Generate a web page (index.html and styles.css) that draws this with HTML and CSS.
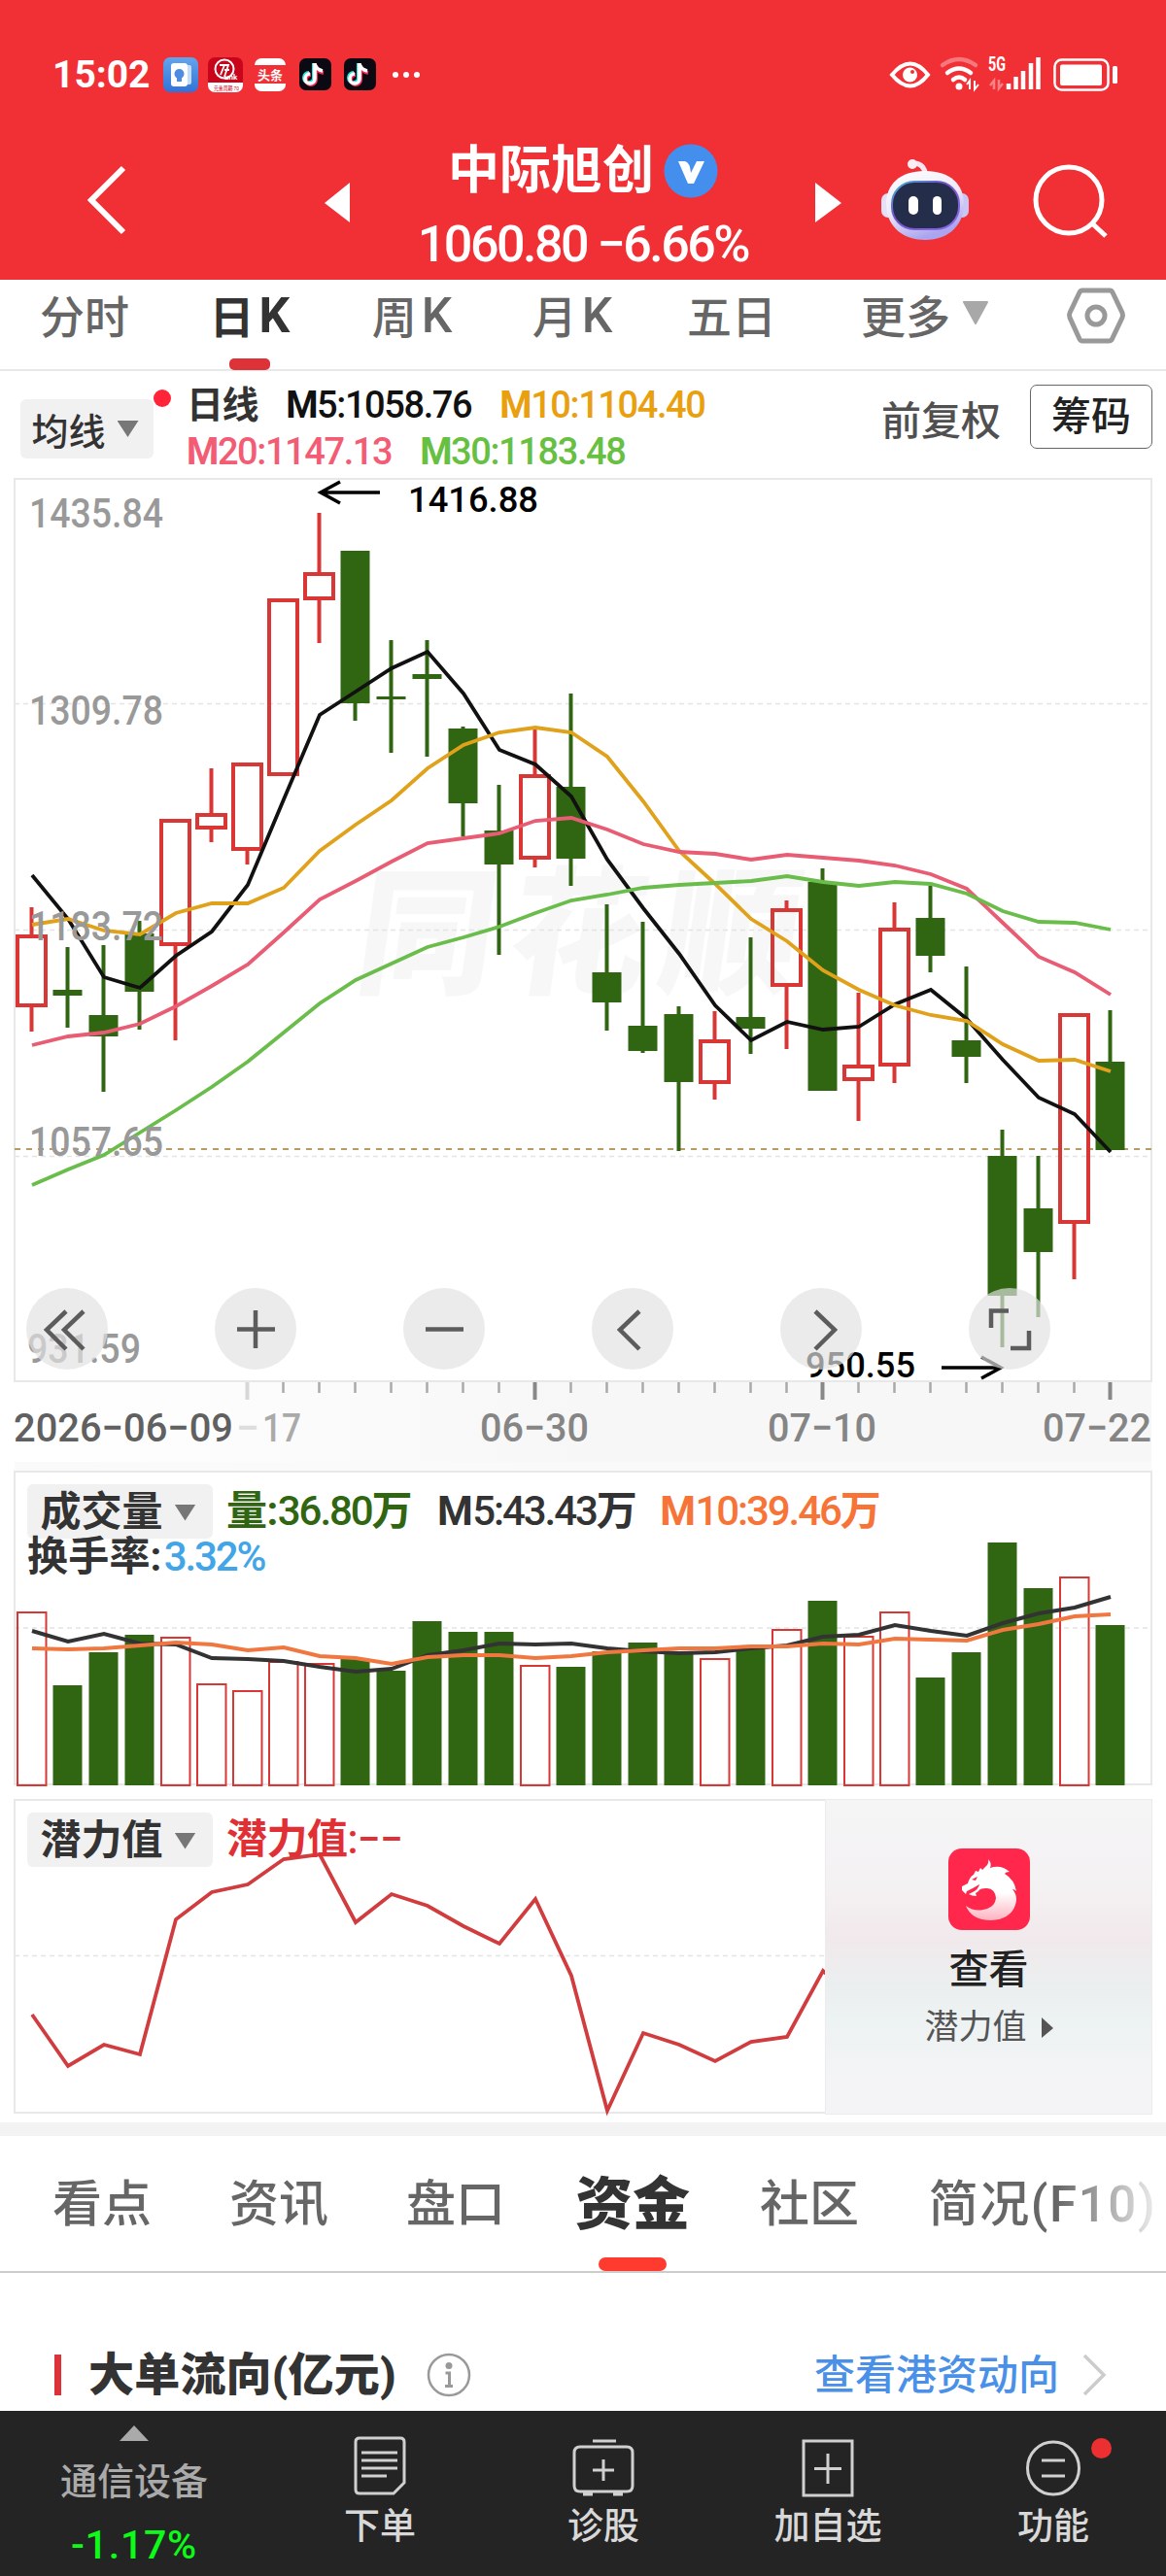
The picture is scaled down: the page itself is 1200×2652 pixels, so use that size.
FILE: index.html
```html
<!DOCTYPE html>
<html lang="zh-CN">
<head>
    <meta charset="UTF-8">
    <meta name="viewport" content="width=device-width, initial-scale=1.0">
    <title>中际旭创 - 日K</title>
    <link rel="stylesheet" href="styles.css">
</head>
<body>
    <header class="header">
        <div class="status-bar">
            <span class="time">15:02</span>
            <svg class="status-apps" width="270" height="40" viewBox="166 57 270 40">
                <defs>
                    <linearGradient id="appBlue" x1="0" y1="0" x2="0" y2="1">
                        <stop offset="0" stop-color="#62a5ec"/><stop offset="1" stop-color="#3272d8"/>
                    </linearGradient>
                    <g id="note">
                        <rect width="33" height="33" rx="7" fill="#0b0912"/>
                        <path d="M16 6v15a5 5 0 1 1-5-5M16 7q2 6 8 7" fill="none" stroke="#27e5df" stroke-width="4" transform="translate(-1 -1)"/>
                        <path d="M16 6v15a5 5 0 1 1-5-5M16 7q2 6 8 7" fill="none" stroke="#f32b58" stroke-width="4" transform="translate(1 1)"/>
                        <path d="M16 5v16a5 5 0 1 1-5-5M16 6q2 6 8 7" fill="none" stroke="#fff" stroke-width="3.6"/>
                    </g>
                </defs>
                <rect x="168" y="59" width="36" height="36" rx="7" fill="url(#appBlue)"/>
                <rect x="188" y="67" width="9" height="20" rx="2" fill="#c3dcfa"/>
                <rect x="176" y="65" width="17" height="24" rx="3" fill="#fff"/>
                <circle cx="184.500" cy="76" r="5" fill="#4c8de2"/>
                <rect x="182" y="79" width="5" height="5" fill="#4c8de2"/>
                <rect x="214" y="59" width="36" height="36" rx="7" fill="#c9051c"/>
                <path d="M214 85h36v3a7 7 0 0 1-7 7h-22a7 7 0 0 1-7-7z" fill="#fff"/>
                <circle cx="231" cy="71" r="9.500" fill="none" stroke="#fff" stroke-width="2"/>
                <path d="M226 67h9l-4 12M231 67l-4 10M231 72h5" fill="none" stroke="#fff" stroke-width="1.800"/>
                <text class="app-tiny" x="231" y="82">unk</text>
                <text class="app-red" x="220" y="93" textLength="26" lengthAdjust="spacingAndGlyphs">元素周期·70</text>
                <rect x="262" y="60" width="32" height="34" rx="7" fill="#fff"/>
                <rect x="262" y="67" width="32" height="19" fill="#f13036"/>
                <text class="app-toutiao" x="265" y="82">头条</text>
                <use href="#note" x="308" y="60"/>
                <use href="#note" x="354" y="60"/>
                <g fill="#fff"><circle cx="407" cy="77" r="3"/><circle cx="418" cy="77" r="3"/><circle cx="429" cy="77" r="3"/></g>
            </svg>
            <svg class="status-system" width="240" height="60" viewBox="914 47 240 60">
                <path d="M918 77q19-23 37 0q-18 23-37 0z" fill="none" stroke="#fff" stroke-width="4"/>
                <circle cx="936.500" cy="77" r="7.500" fill="#fff"/><circle cx="939" cy="74" r="2" fill="#f13036"/>
                <g fill="none" stroke="#fff" stroke-linecap="round" stroke-width="4.500">
                    <path d="M970 67q17-12 34 0" opacity=".35"/>
                    <path d="M975 75q12-9 24 0M981 82q6-5 12 0"/>
                </g>
                <circle cx="987" cy="89" r="3.500" fill="#fff"/>
                <path d="M998 92v-9l-3 4M1003 83v9l4-5" fill="none" stroke="#fff" stroke-width="2"/>
                <text class="net" x="1017" y="73" textLength="18" lengthAdjust="spacingAndGlyphs">5G</text>
                <path d="M1023 92v-9l-4 5M1028 82v9l4-5" fill="none" stroke="#fff" stroke-width="2.500" opacity=".4"/>
                <path d="M1038 86v6M1045.500 79v13M1053 73v19M1061 65v27M1068.500 59v33" stroke="#fff" stroke-width="4.500"/>
                <rect x="1085.500" y="61.500" width="55" height="31" rx="7" fill="none" stroke="#fff" stroke-width="2.500"/>
                <rect x="1091" y="66.500" width="43" height="21.500" rx="2" fill="#fff"/>
                <rect x="1145" y="68" width="5" height="18" rx="1.500" fill="#fff"/>
            </svg>
        </div>
        <nav class="nav-bar">
            <svg width="46" height="78" viewBox="0 0 46 78"><path d="M42 6L9 39l33 33" fill="none" stroke="#fff" stroke-width="6"/></svg>
            <svg width="27" height="42" viewBox="0 0 27 42"><path d="M26 0v41L0 21z" fill="#fff"/></svg>
            <div class="stock">
                <div class="stock-name">中际旭创
                    <svg width="56" height="56" viewBox="0 0 56 56"><circle cx="28" cy="28" r="27.500" fill="#448fee"/><path d="M15 18h7q5 1 6 12l6-12h8L31 41h-6z" fill="#fff"/></svg>
                </div>
                <div class="stock-price">1060.80 −6.66%</div>
            </div>
            <svg width="27" height="42" viewBox="0 0 27 42"><path d="M0 0v41l27-20z" fill="#fff"/></svg>
            <svg width="92" height="86" viewBox="906 162 92 86">
                <defs>
                    <linearGradient id="head" x1="0" y1="0" x2=".4" y2="1">
                        <stop offset="0" stop-color="#fff"/><stop offset=".55" stop-color="#eeeaf8"/><stop offset="1" stop-color="#aaa5ee"/>
                    </linearGradient>
                    <linearGradient id="visor" x1="0" y1="0" x2="1" y2="1">
                        <stop offset="0" stop-color="#3fb8d2"/><stop offset=".4" stop-color="#7450c9"/><stop offset="1" stop-color="#8e6bec"/>
                    </linearGradient>
                </defs>
                <path d="M939 168q12-1 14 13" fill="none" stroke="#f6e6f1" stroke-width="5"/>
                <circle cx="939" cy="169" r="5" fill="#fbeff6"/>
                <rect x="907" y="199" width="16" height="25" rx="7" fill="#e4e0f8"/>
                <rect x="981" y="199" width="16" height="25" rx="7" fill="#c9c6f6"/>
                <path d="M952 176c26 0 40 14 40 34s-14 37-40 37-40-17-40-37 14-34 40-34z" fill="url(#head)"/>
                <rect x="918" y="187" width="69" height="49" rx="23" fill="#242d49" stroke="url(#visor)" stroke-width="2"/>
                <rect x="935" y="202" width="10" height="19" rx="5" fill="#fff"/><rect x="960" y="202" width="9" height="19" rx="4.500" fill="#fff"/>
            </svg>
            <svg width="78" height="80" viewBox="1062 168 78 80"><circle cx="1100" cy="207" r="34" fill="none" stroke="#fff" stroke-width="5"/><path d="M1124 231l14 13" stroke="#fff" stroke-width="5"/></svg>
        </nav>
    </header>

    <div class="period-tabs">
        <div class="period">分时</div>
        <div class="period active">日<span>K</span></div>
        <div class="period">周<span>K</span></div>
        <div class="period">月<span>K</span></div>
        <div class="period">五日</div>
        <div class="period">更多<svg width="28" height="26" viewBox="0 0 28 26"><path d="M2 1h24L14 23z" fill="#a8a8a8" stroke="#a8a8a8" stroke-width="2" stroke-linejoin="round"/></svg></div>
        <div class="period settings">
            <svg width="62" height="60" viewBox="0 0 62 60"><path d="M17 4h28q2 0 3 2l10 21q1 3 0 5L48 53q-1 3-4 3H17q-2 0-3-2L4 32q-1-3 0-5L14 6q1-2 3-2z" fill="none" stroke="#999" stroke-width="5"/><circle cx="31" cy="30" r="9" fill="none" stroke="#999" stroke-width="5"/></svg>
        </div>
    </div>

    <div class="ma-bar">
        <div class="pill ma-pill">均线<i class="caret"></i><b class="dot"></b></div>
        <div class="ma-values">
            <div><span class="c-title">日线</span><span class="c-m5"><b>M</b>5:1058.76</span><span class="c-m10"><b>M</b>10:1104.40</span></div>
            <div><span class="c-m20"><b>M</b>20:1147.13</span><span class="c-m30"><b>M</b>30:1183.48</span></div>
        </div>
        <div class="adjust">前复权</div>
        <div class="chips">筹码</div>
    </div>

    <div class="panel">
        <svg id="kline" width="1200" height="1013" viewBox="0 492 1200 1013"></svg>
        <div class="controls">
            <button><svg viewBox="0 0 84 84"><path d="M41 24L21 43l20 20M59 24L39 43l20 20"/></svg></button>
            <button><svg viewBox="0 0 84 84"><path d="M42 23v39M23 42.500h39"/></svg></button>
            <button><svg viewBox="0 0 84 84"><path d="M23 42.500h39"/></svg></button>
            <button><svg viewBox="0 0 84 84"><path d="M49 24L29 43l20 20"/></svg></button>
            <button><svg viewBox="0 0 84 84"><path d="M36 24l20 19-20 20"/></svg></button>
            <button><svg viewBox="0 0 84 84"><path d="M41 23.500H23V41M62 44v18H43"/></svg></button>
        </div>
    </div>

    <div class="panel">
        <svg id="volume" width="1200" height="343" viewBox="0 1505 1200 343"></svg>
        <div class="indicator volume-info">
            <div class="pill">成交量<i class="caret"></i></div>
            <span class="c-vol"><b>量:</b>36.80<b>万</b></span>
            <span class="c-dark"><b>M</b>5:43.43<b>万</b></span>
            <span class="c-orange"><b>M</b>10:39.46<b>万</b></span>
            <div class="turnover"><b>换手率:</b><span>3.32%</span></div>
        </div>
    </div>

    <div class="panel">
        <svg id="potential" width="1200" height="337" viewBox="0 1848 1200 337"></svg>
        <div class="indicator potential-info">
            <div class="pill">潜力值<i class="caret"></i></div>
            <span class="c-red"><b>潜力值</b>:−−</span>
        </div>
        <div class="promo">
            <svg width="84" height="84" viewBox="0 0 84 84">
                <defs><linearGradient id="dragon" x1="0" y1="0" x2="0" y2="1"><stop offset=".55" stop-color="#fff"/><stop offset="1" stop-color="#ffb3c0"/></linearGradient></defs>
                <rect width="84" height="84" rx="14" fill="#ff274b"/>
                <path d="M38 19Q42 16 41 11Q45 15 43 20Q54 16 63 24Q59 24 58 26Q68 32 70 44Q68 42 66 42Q72 49 69 58Q64 73 44 74Q24 74 18 59Q26 65 36 63Q48 61 49 51Q48 41 39 41Q32 41 31 44L28 46L29 49Q24 49 21 47L25 45Q31 42 32 37L25 41L19 44L18 47L14 43V39L20 36Q22 29 26 27L28 23L31 24L33 20L35 22Z" fill="url(#dragon)"/>
                <path d="M24 32l6-3-2 4z" fill="#ff274b"/>
            </svg>
            <div class="promo-title">查看</div>
            <div class="promo-sub">潜力值<svg width="13" height="22" viewBox="0 0 13 22"><path d="M1 0v21l12-10z" fill="#555"/></svg></div>
        </div>
    </div>

    <div class="divider"></div>

    <div class="detail-tabs">
        <div class="detail">看点</div>
        <div class="detail">资讯</div>
        <div class="detail">盘口</div>
        <div class="detail active">资金</div>
        <div class="detail">社区</div>
        <div class="detail faded">简况(F10)</div>
    </div>

    <section class="flow">
        <h2>大单流向(亿元)</h2>
        <svg width="46" height="46" viewBox="0 0 46 46"><circle cx="23" cy="23" r="21" fill="none" stroke="#999" stroke-width="2.500"/><circle cx="23" cy="13.500" r="3.500" fill="#999"/><path d="M19.500 21h4v13M19 34.500h8" fill="none" stroke="#999" stroke-width="3"/></svg>
        <a href="#">查看港资动向</a>
        <svg width="26" height="44" viewBox="0 0 26 44"><path d="M3 2l20 20L3 42" fill="none" stroke="#ccc" stroke-width="3.500"/></svg>
    </section>

    <footer class="toolbar">
        <div class="sector">
            <svg width="30" height="16" viewBox="0 0 30 16"><path d="M15 0l15 16H0z" fill="#aaa"/></svg>
            <div class="sector-name">通信设备</div>
            <div class="sector-change">-1.17%</div>
        </div>
        <div class="tool">
            <svg viewBox="0 0 60 64"><path d="M9 3h42q4 0 4 4v42L44 60H9q-4 0-4-4V7q0-4 4-4zM11 18h37M11 26h37M11 34h37M11 42h26"/></svg>下单
        </div>
        <div class="tool">
            <svg viewBox="0 0 60 64"><path d="M19 6h24M6 12h48q6 0 6 6v34q0 6-6 6H6q-6 0-6-6V18q0-6 6-6zM30 25v22M19 36h22M9 61h10M40 61h10"/></svg>诊股
        </div>
        <div class="tool">
            <svg viewBox="0 0 60 64"><path d="M5 6h50v56H5zM30 19v31M16 34.500h28"/></svg>加自选
        </div>
        <div class="tool">
            <svg viewBox="0 0 60 64"><ellipse cx="30" cy="34" rx="26.500" ry="27"/><path d="M18 26h24M18 42h24"/></svg>功能
            <b class="dot"></b>
        </div>
    </footer>

    <script>
        const RED = '#d93636';
        const GREEN = '#306612';
        const x = i => 32.5 + 37 * i;

        // [up, high, top, bottom, low]
        const candles = [
            [1, 934, 962, 1037, 1062], [0, 975, 1019, 1025, 1058], [0, 973, 1045, 1067, 1124],
            [0, 948, 961, 1021, 1060], [1, 843, 843, 974, 1071], [1, 791, 837, 854, 867],
            [1, 785, 785, 876, 890], [1, 616, 616, 799, 799], [1, 528, 589, 618, 662],
            [0, 567, 567, 724, 742], [0, 659, 717, 720, 775], [0, 659, 694, 699, 779],
            [0, 748, 750, 827, 861], [0, 808, 855, 890, 983], [1, 750, 797, 885, 893],
            [0, 714, 810, 884, 912], [0, 931, 1001, 1032, 1061], [0, 949, 1056, 1082, 1084],
            [0, 1036, 1044, 1114, 1185], [1, 1041, 1070, 1116, 1132], [0, 965, 1047, 1059, 1085],
            [1, 927, 935, 1016, 1080], [0, 894, 908, 1123, 1123], [1, 1022, 1096, 1113, 1154],
            [1, 929, 955, 1098, 1115], [0, 912, 945, 984, 1001], [0, 995, 1071, 1088, 1115],
            [0, 1163, 1190, 1334, 1387], [0, 1190, 1244, 1289, 1356], [1, 1043, 1043, 1260, 1317],
            [0, 1040, 1093, 1184, 1184]
        ];
        const averages = {
            '#111111': [901, 946, 1006, 1017, 984, 959, 911, 823, 736, 712, 688, 671, 714, 772, 787, 820, 885, 935, 982, 1035, 1071, 1052, 1060, 1057, 1034, 1019, 1049, 1091, 1130, 1147, 1186],
            '#e0a11b': [952, 946, 958, 962, 940, 930, 930, 914, 876, 849, 824, 791, 767, 754, 749, 754, 779, 825, 876, 910, 946, 969, 999, 1019, 1035, 1045, 1051, 1075, 1092, 1091, 1103],
            '#e85c74': [1076, 1067, 1063, 1054, 1036, 1015, 993, 960, 926, 907, 887, 868, 863, 858, 845, 842, 854, 869, 877, 879, 885, 880, 883, 886, 891, 900, 915, 950, 985, 1001, 1024],
            '#6abd4b': [1220, 1204, 1189, 1166, 1143, 1119, 1093, 1063, 1033, 1009, 992, 975, 965, 954, 940, 927, 921, 914, 911, 909, 907, 902, 908, 912, 908, 910, 920, 938, 949, 950, 957]
        };
        const volumes = [1659, 1735, 1701, 1683, 1685, 1733, 1740, 1710, 1712, 1708, 1720, 1669, 1680, 1680, 1714, 1716, 1700, 1691, 1700, 1707, 1698, 1677, 1648, 1684, 1659, 1727, 1701, 1588, 1635, 1623, 1673];
        const volumeAverages = {
            '#333333': [1679, 1690, 1682, 1692, 1693, 1707, 1708, 1710, 1716, 1721, 1718, 1704, 1699, 1692, 1693, 1692, 1697, 1700, 1702, 1701, 1697, 1694, 1685, 1683, 1673, 1679, 1684, 1671, 1661, 1655, 1644],
            '#f07840': [1697, 1698, 1697, 1694, 1691, 1693, 1699, 1696, 1705, 1707, 1713, 1706, 1704, 1704, 1707, 1705, 1701, 1699, 1697, 1697, 1695, 1695, 1692, 1693, 1687, 1688, 1689, 1678, 1672, 1664, 1662]
        };
        const potential = [2074, 2127, 2105, 2115, 1976, 1948, 1940, 1914, 1909, 1979, 1950, 1962, 1983, 2001, 1955, 2034, 2173, 2093, 2105, 2122, 2102, 2097, 2029, 2062];

        function rect(left, top, w, h, attrs) {
            return `<rect x="${left}" y="${top}" width="${w}" height="${h}" ${attrs}/>`;
        }
        function line(x1, y1, x2, y2, attrs) {
            return `<path d="M${x1} ${y1}L${x2} ${y2}" ${attrs}/>`;
        }
        function curve(values, color, width) {
            const points = values.map((v, i) => `${x(i) + 0.5},${v}`).join(' ');
            return `<polyline points="${points}" fill="none" stroke="${color}" stroke-width="${width}"/>`;
        }
        function label(str, left, base, width, cls) {
            return `<text class="${cls}" x="${left}" y="${base}" textLength="${width}" lengthAdjust="spacingAndGlyphs">${str}</text>`;
        }
        function grid(y) {
            return line(15, y, 1185, y, 'class="grid"');
        }

        function drawKline() {
            let s = '<defs><linearGradient id="axisFade" x1="0" y1="0" x2="1" y2="0"><stop offset="0" stop-color="#f7f7f7" stop-opacity="0"/><stop offset=".5" stop-color="#f7f7f7"/></linearGradient></defs>';
            s += rect(15, 1422, 1170, 83, 'fill="url(#axisFade)"');
            s += rect(15, 493, 1170, 929, 'class="frame"');
            s += '<text class="watermark" transform="translate(362 1012) skewX(-8)" textLength="455">同花顺</text>';
            s += grid(724.5) + grid(957.5) + grid(1190.5);
            s += line(15, 1183, 1185, 1183, 'class="last-price"');
            candles.forEach(([up, high, top, bottom, low], i) => {
                const color = up ? RED : GREEN;
                const stroke = `stroke="${color}" stroke-width="4" fill="none"`;
                if (high < top) s += line(x(i), high, x(i), top, stroke);
                if (low > bottom) s += line(x(i), bottom, x(i), low, stroke);
                s += up ? rect(x(i) - 14.5, top + 2, 29, bottom - top - 4, stroke)
                        : rect(x(i) - 15, top, 30, bottom - top, `fill="${color}"`);
            });
            Object.entries(averages).forEach(([color, values]) => s += curve(values, color, 3.8));
            [['1435.84', 543], ['1309.78', 746], ['1183.72', 968], ['1057.65', 1190]].forEach(([v, y]) => s += label(v, 30, y, 138, 'price'));
            s += label('931.59', 28, 1403, 117, 'price');
            s += '<path d="M391 507H330M350 496L330 507L350 518M969 1408H1030M1010 1397L1030 1408L1010 1419" fill="none" stroke="#000" stroke-width="3.5"/>';
            s += label('1416.88', 420, 527, 134, 'extreme') + label('950.55', 829, 1418, 113, 'extreme');
            for (let i = 6; i <= 30; i++) {
                const major = i % 8 === 6;
                s += line(x(i), 1423, x(i), major ? 1441 : 1434, `stroke="${i === 6 ? '#d8d8d8' : major ? '#888' : '#aaa'}" stroke-width="${major ? 4 : 2.5}"`);
            }
            s += label('2026−06−09', 14, 1484, 226, 'date dark');
            s += label('−', 243, 1484, 24, 'date pale') + label('17', 270, 1484, 40, 'date light');
            s += label('06−30', 494, 1484, 112, 'date') + label('07−10', 790, 1484, 112, 'date') + label('07−22', 1073, 1484, 112, 'date');
            document.getElementById('kline').innerHTML = s;
        }

        function drawVolume() {
            let s = rect(15, 1505, 1170, 10, 'fill="#fafafa"') + rect(15, 1515, 1170, 322, 'class="frame"') + grid(1676);
            volumes.forEach((top, i) => {
                s += candles[i][0] ? rect(x(i) - 14.5, top + 1, 29.5, 1837 - top, `fill="none" stroke="${RED}" stroke-width="2"`)
                                   : rect(x(i) - 15, top, 30, 1838 - top, `fill="${GREEN}"`);
            });
            Object.entries(volumeAverages).forEach(([color, values]) => s += curve(values, color, 4));
            document.getElementById('volume').innerHTML = s;
        }

        function drawPotential() {
            document.getElementById('potential').innerHTML =
                rect(15, 1853, 1170, 322, 'class="frame"') + grid(2013.5) + curve(potential, '#d13c3e', 3.8);
        }

        drawKline();
        drawVolume();
        drawPotential();
    </script>
</body>
</html>
```

FILE: styles.css
```css
* {
    margin: 0;
    padding: 0;
    box-sizing: border-box;
}

body {
    width: 1200px;
    height: 2652px;
    overflow: hidden;
    font-family: Roboto, 'Noto Sans CJK SC', sans-serif;
    background: #fff;
    color: #333;
}

svg {
    display: block;
    flex-shrink: 0;
}

/* header */
.header {
    height: 288px;
    background: #f13036;
    color: #fff;
}

.status-bar {
    height: 154px;
    padding: 0 46px 0 54px;
    display: flex;
    align-items: center;
}

.time {
    width: 112px;
    font-size: 39px;
    font-weight: 700;
    white-space: nowrap;
}

.status-system {
    margin-left: auto;
}

.app-tiny {
    font-size: 8px;
    font-weight: 700;
    fill: #fff;
}

.app-red {
    font-size: 6px;
    fill: #c9051c;
}

.app-toutiao {
    font-size: 13px;
    font-weight: 700;
    fill: #fff;
}

.net {
    font-size: 20px;
    font-weight: 700;
    fill: #fff;
}

.nav-bar {
    height: 134px;
    display: grid;
    grid-template-columns: 249px 27px 478px 41px 182px 78px;
    align-items: start;
    padding: 13px 0 0 85px;
}

.nav-bar > svg:nth-of-type(2),
.nav-bar > svg:nth-of-type(3) {
    margin-top: 21px;
}

.nav-bar > svg:nth-of-type(4) {
    margin: -5px 0 0 26px;
}

.stock {
    margin-top: -22px;
    text-align: center;
}

.stock-name {
    height: 62px;
    line-height: 62px;
    display: flex;
    align-items: center;
    justify-content: center;
    gap: 10px;
    font-size: 53px;
    font-weight: 700;
}

.stock-price {
    margin-top: 15px;
    line-height: 60px;
    font-size: 52px;
    font-weight: 500;
    letter-spacing: -2.5px;
    white-space: nowrap;
}

/* period tabs */
.period-tabs {
    height: 94px;
    display: grid;
    grid-template-columns: 174px 172px 156px 174px 154px 244px 108px;
    border-bottom: 2px solid #e8e8e8;
}

.period {
    height: 74px;
    padding-bottom: 4px;
    display: flex;
    align-items: center;
    justify-content: center;
    position: relative;
    font-size: 46px;
    font-weight: 500;
    color: #666;
}

.period span {
    margin-left: 5px;
    padding-top: 4px;
    font-size: 50px;
}

.period svg {
    margin-left: 12px;
}

.period.settings {
    padding-bottom: 0;
}

.period.settings svg {
    margin-left: 0;
}

.period.active {
    padding-right: 6px;
    font-weight: 700;
    color: #333;
}

.period.active::after {
    content: '';
    position: absolute;
    left: 62px;
    bottom: -19px;
    width: 42px;
    height: 12px;
    border-radius: 5px;
    background: #dd3338;
}

/* moving averages */
.ma-bar {
    height: 110px;
    padding: 0 14px 0 21px;
    display: flex;
    align-items: flex-start;
}

.pill {
    display: flex;
    align-items: center;
    justify-content: center;
    gap: 12px;
    border-radius: 6px;
    background: #f1f1f1;
    color: #333;
    font-weight: 700;
}

.ma-pill {
    width: 137px;
    height: 61px;
    margin-top: 29px;
    padding-right: 4px;
    position: relative;
    font-size: 38px;
    font-weight: 500;
}

.caret {
    width: 22px;
    height: 17px;
    background: #777;
    clip-path: polygon(0 0, 100% 0, 50% 100%);
}

.dot {
    position: absolute;
    border-radius: 50%;
    background: #ff2438;
}

.ma-pill .dot {
    top: -10px;
    right: -18px;
    width: 18px;
    height: 18px;
}

.ma-values {
    padding: 11px 0 0 34px;
    font-size: 38px;
    font-weight: 500;
    letter-spacing: -1.4px;
    line-height: 48px;
}

.ma-values div {
    height: 48px;
    display: flex;
    white-space: nowrap;
    gap: 29px;
}

.c-title {
    font-weight: 700;
}

.c-m5 { color: #111; }
.c-m10 { color: #e8a010; }
.c-m20 { color: #f25c75; }
.c-m30 { color: #68c043; }

.adjust {
    margin-left: auto;
    margin-right: 30px;
    margin-top: 22px;
    line-height: 60px;
    font-size: 41px;
    font-weight: 500;
    color: #505050;
    white-space: nowrap;
}

.chips {
    width: 126px;
    height: 66px;
    margin-top: 14px;
    border: 1.5px solid #666;
    border-radius: 7px;
    line-height: 64px;
    text-align: center;
    font-size: 41px;
    font-weight: 500;
    color: #222;
}

/* charts */
.panel {
    position: relative;
}

.frame {
    fill: none;
    stroke: #e8e8e8;
    stroke-width: 2;
}

.grid {
    stroke: #e4e4e4;
    stroke-width: 1.5;
    stroke-dasharray: 5 4;
}

.last-price {
    stroke: #b99b62;
    stroke-width: 2;
    stroke-dasharray: 6 6;
}

.watermark {
    font-size: 142px;
    font-weight: 900;
    fill: #f7f7f8;
}

.price {
    font-size: 42px;
    font-weight: 500;
    fill: #999;
}

.extreme {
    font-size: 36px;
    font-weight: 500;
    fill: #000;
}

.date {
    font-size: 41px;
    font-weight: 500;
    fill: #858585;
}

.date.dark { fill: #606060; }
.date.light { fill: #aaa; }
.date.pale { fill: #ddd; }

.controls {
    position: absolute;
    left: 27px;
    top: 834px;
    display: flex;
    gap: 110px;
}

.controls button {
    width: 84px;
    height: 84px;
    border: none;
    border-radius: 50%;
    background: rgba(226, 226, 226, 0.68);
}

.controls path {
    fill: none;
    stroke: #5c5c5c;
    stroke-width: 4.5;
}

.indicator {
    position: absolute;
    left: 28px;
    display: flex;
    flex-wrap: wrap;
    align-items: center;
    width: 1000px;
    font-size: 42px;
    font-weight: 500;
    line-height: 56px;
    letter-spacing: -2.1px;
    white-space: nowrap;
}

.indicator .pill {
    width: 191px;
    height: 56px;
    padding: 2px 4px 0 0;
    margin-right: 14px;
    letter-spacing: 0;
    font-size: 42px;
    font-weight: 700;
}

.indicator b {
    letter-spacing: -0.5px;
}

.volume-info { top: 23px; }
.potential-info { top: 18px; }

.c-vol {
    color: #306612;
    margin-right: 26px;
}

.c-dark { margin-right: 24px; }
.c-orange { color: #f77439; }
.c-red {
    color: #e03035;
    letter-spacing: -0.5px;
}

.turnover {
    width: 100%;
    margin-top: -3px;
    line-height: 44px;
}

.turnover b {
    letter-spacing: 0.2px;
}

.turnover span {
    margin-left: 2px;
    color: #42a5e8;
}

.promo {
    position: absolute;
    left: 849px;
    top: 4px;
    width: 337px;
    height: 325px;
    padding-top: 50px;
    border: 1px solid #ececee;
    display: flex;
    flex-direction: column;
    align-items: center;
    background: linear-gradient(180deg, #f5f5f6 0%, #f4f1f3 28%, #f1e9eb 44%, #ebeeef 58%, #edf2f3 70%, #f4f4f6 90%);
}

.promo-title {
    margin-top: 12px;
    font-size: 41px;
    line-height: 58px;
    font-weight: 500;
    color: #222;
}

.promo-sub {
    margin-top: 2px;
    display: flex;
    align-items: center;
    gap: 14px;
    font-size: 35px;
    line-height: 58px;
    color: #555;
}

.divider {
    height: 14px;
    background: #f3f3f3;
}

/* detail tabs */
.detail-tabs {
    height: 141px;
    padding-left: 14px;
    display: flex;
    border-bottom: 2px solid #ccc;
}

.detail {
    width: 182px;
    height: 139px;
    position: relative;
    text-align: center;
    font-size: 51px;
    line-height: 142px;
    font-weight: 500;
    color: #666;
    white-space: nowrap;
}

.detail.active {
    font-size: 59px;
    font-weight: 900;
    color: #333;
}

.detail.active::after {
    content: '';
    position: absolute;
    left: 56px;
    bottom: 0;
    width: 70px;
    height: 14px;
    border-radius: 7px;
    background: #ff3b30;
}

.detail.faded {
    width: 236px;
    margin-left: 31px;
    letter-spacing: 1.6px;
    background: linear-gradient(90deg, #666 56%, #e8e8e8 98%);
    -webkit-background-clip: text;
    background-clip: text;
    -webkit-text-fill-color: transparent;
}

/* money flow */
.flow {
    height: 142px;
    padding: 68px 61px 0 56px;
    display: flex;
    align-items: center;
}

.flow h2 {
    padding-left: 28px;
    margin-right: 31px;
    border-left: 7px solid #dd3338;
    font-size: 47px;
    line-height: 42px;
    font-weight: 900;
    letter-spacing: 0.2px;
}

.flow a {
    margin-left: auto;
    margin-right: 23px;
    padding-top: 2px;
    font-size: 42px;
    line-height: 60px;
    font-weight: 500;
    color: #4a90e8;
    text-decoration: none;
}

/* bottom toolbar */
.toolbar {
    height: 170px;
    display: grid;
    grid-template-columns: 276px 230px 230px 232px 232px;
    background: #242424;
    color: #d8d8d8;
}

.sector {
    padding-top: 15px;
    display: flex;
    flex-direction: column;
    align-items: center;
}

.sector-name {
    margin-top: 15px;
    font-size: 38px;
    line-height: 54px;
    font-weight: 500;
    color: #aaa;
}

.sector-change {
    margin-top: 12px;
    font-size: 41px;
    line-height: 52px;
    font-weight: 500;
    letter-spacing: 0.8px;
    color: #0cfb18;
}

.tool {
    padding-top: 25px;
    position: relative;
    display: flex;
    flex-direction: column;
    align-items: center;
    font-size: 37px;
    line-height: 54px;
    font-weight: 500;
}

.tool svg {
    width: 60px;
    height: 64px;
    margin-bottom: 4px;
    overflow: visible;
    fill: none;
    stroke: #d0d0d0;
    stroke-width: 3;
}

.tool .dot {
    top: 28px;
    left: 155px;
    width: 21px;
    height: 21px;
    background: #ec2f30;
}
```
